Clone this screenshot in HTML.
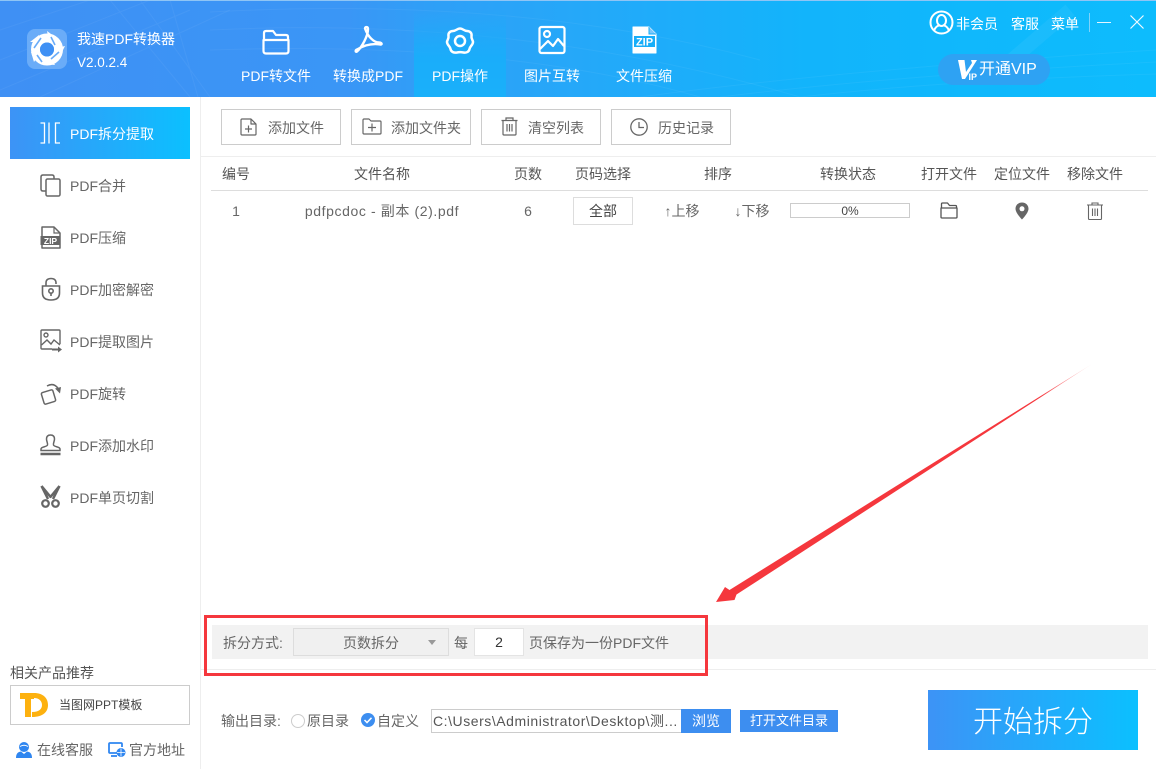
<!DOCTYPE html>
<html lang="zh">
<head>
<meta charset="utf-8">
<title>我速PDF转换器</title>
<style>
html,body{margin:0;padding:0;background:#fff}
body{position:relative;width:1156px;height:769px;overflow:hidden;font-family:"Liberation Sans","Noto Sans CJK SC",sans-serif;font-size:14px;color:#666}
.a{position:absolute;white-space:nowrap}
.c{position:absolute;white-space:nowrap;transform:translateX(-50%);text-align:center}
svg{position:absolute;overflow:visible}
#hd{position:absolute;left:0;top:0;width:1156px;height:97px;background:linear-gradient(90deg,#3f90f4 0%,#3a96f6 30%,#2f9ff7 37%,#25a8f9 50%,#12b4fb 70%,#0dbcfd 100%);overflow:hidden}
#tab{position:absolute;left:414px;top:0;width:92px;height:97px;background:linear-gradient(180deg,rgba(26,173,250,0) 10%,#1aadfa 60%,#1ab0fa 100%)}
.tt{position:absolute;transform:translateX(-50%);top:67px;color:#fff;font-size:14px;white-space:nowrap;line-height:18px}
.wh{color:#fff}
.btn{position:absolute;top:109px;width:118px;height:34px;border:1px solid #ccc;background:#fff}
.btn span{position:absolute;top:9px;font-size:14px;line-height:18px;color:#666;white-space:nowrap}
.side{position:absolute;left:70px;font-size:14px;line-height:18px;color:#666;white-space:nowrap}
.th{position:absolute;top:165px;transform:translateX(-50%);font-size:14px;line-height:18px;color:#555;white-space:nowrap}
.td{position:absolute;top:202px;transform:translateX(-50%);font-size:14px;line-height:18px;color:#666;white-space:nowrap}
</style>
</head>
<body>

<div id="hd">
  <svg style="left:0;top:0" width="1156" height="97" fill="none" stroke="#fff" stroke-opacity=".05">
    <path d="M0 30 L90 0M0 60 L150 0M0 90 L190 10M40 97 L230 10M110 0 L190 97M140 0 L210 97M170 0 L198 97"/>
    <path d="M210 12 Q520 -5 760 60M210 30 Q520 15 800 97M210 50 Q500 40 700 97"/>
    <path d="M640 97 Q840 70 1156 50M720 97 Q900 75 1156 62M800 97 Q950 80 1156 74"/>
    <path d="M1000 70 L1070 10" stroke-width="14" stroke-opacity=".05"/>
  </svg>
  <div style="position:absolute;left:0;top:0;width:1156px;height:1px;background:#8fc5f5"></div>
  <div id="tab"></div>

  <!-- logo -->
  <div style="position:absolute;left:27px;top:29px;width:40px;height:40px;border-radius:8px;background:#6aacf8"></div>
  <svg style="left:27px;top:29px" width="40" height="40" viewBox="0 0 40 40">
    <circle cx="20" cy="20.500" r="11.500" fill="none" stroke="#fff" stroke-width="9"/>
    <path d="M20 2 L28 8 L22 12ZM38 17 L33 27 L30 19ZM28 36 L18 35 L24 29ZM7 33 L4 23 L12 25ZM3 13 L12 6 L13 13Z" fill="#fff"/>
    <path d="M24 8 L28 16M32 23 L24 30M15 33 L10 26M7 19 L14 9" stroke="#6aacf8" stroke-width="1.600"/>
    <circle cx="20" cy="20.500" r="7" fill="#3f90f4"/>
  </svg>
  <div class="a wh" style="left:77px;top:30px;font-size:14px;line-height:18px">我速PDF转换器</div>
  <div class="a wh" style="left:77px;top:54px;font-size:13.500px;line-height:18px">V2.0.2.4</div>

  <!-- tabs -->
  <svg style="left:262px;top:29px" width="28" height="26" viewBox="0 0 28 26" fill="none" stroke="#fff" stroke-width="2.200" stroke-linejoin="round">
    <path d="M2 11V4Q2 2 4 2H11L14 6H24Q26 6 26 8V11"/>
    <path d="M1.500 11H26.500V22Q26.500 24.500 24 24.500H4Q1.500 24.500 1.500 22Z"/>
  </svg>
  <svg style="left:353px;top:25px" width="30" height="32" viewBox="0 0 30 32" fill="none" stroke="#fff" stroke-width="2.400" stroke-linejoin="round">
    <path d="M12 3.500C12 1.500 15 1.500 15 4C15 11 9 22 4 26.500C2.500 27.500 2 25.500 4 24.500C10 21 18 18 27 19.500C29.500 20 29 17.500 26 17.500C21 17.500 15 12 12 3.500Z"/>
  </svg>
  <svg style="left:445px;top:26px" width="30" height="30" viewBox="0 0 30 30" fill="none" stroke="#fff" stroke-width="2.500" stroke-linejoin="round">
    <path d="M15 2.500C18 2.500 19 5 22 5C25 5 27 7 26.500 10C26 13 28 14 28 16C28 19 25 20 24.500 23C24 26 21 27 18.500 26.500C16 26 14 26 12 26.500C9 27 6 26 5.500 23C5 20 2 19 2 16C2 14 4 13 3.500 10C3 7 5 5 8 5C11 5 12 2.500 15 2.500Z"/>
    <circle cx="15" cy="15" r="5"/>
  </svg>
  <svg style="left:538px;top:25px" width="28" height="30" viewBox="0 0 28 30" fill="none" stroke="#fff" stroke-width="2.200" stroke-linejoin="round">
    <rect x="1.500" y="2" width="25" height="26" rx="2"/>
    <circle cx="9" cy="9" r="3"/>
    <path d="M2 24L10 16L15 21L20 14L26 21"/>
  </svg>
  <svg style="left:630px;top:25px" width="28" height="30" viewBox="0 0 28 30">
    <path d="M3 2H19L26 9V28H3Z" fill="#fff" stroke="#fff" stroke-linejoin="round"/>
    <path d="M19 2V9H26" fill="#7cc8fb" stroke="#17aef9"/>
    <rect x="4" y="11" width="21" height="11" fill="#17aef9"/>
    <text x="14.500" y="20.500" text-anchor="middle" fill="#fff" font-size="11" font-family="Liberation Sans" font-weight="bold">ZIP</text>
  </svg>
  <div class="tt" style="left:276px">PDF转文件</div>
  <div class="tt" style="left:368px">转换成PDF</div>
  <div class="tt" style="left:460px">PDF操作</div>
  <div class="tt" style="left:552px">图片互转</div>
  <div class="tt" style="left:644px">文件压缩</div>

  <!-- top right -->
  <svg style="left:929px;top:10px" width="25" height="25" viewBox="0 0 25 25" fill="none" stroke="#fff" stroke-width="2">
    <circle cx="12.500" cy="12.500" r="11"/>
    <ellipse cx="12.500" cy="10.500" rx="4.500" ry="5.500"/>
    <path d="M5 20.500Q7 16 10 15.500M20 20.500Q18 16 15 15.500"/>
  </svg>
  <div class="a wh" style="left:956px;top:15px;line-height:18px;font-size:14px">非会员</div>
  <div class="a wh" style="left:1011px;top:15px;line-height:18px;font-size:14px">客服</div>
  <div class="a wh" style="left:1051px;top:15px;line-height:18px;font-size:14px">菜单</div>
  <div style="position:absolute;left:1089px;top:13px;width:1px;height:19px;background:#7fd3fb"></div>
  <div style="position:absolute;left:1097px;top:22px;width:14px;height:1px;background:#e4f5ff"></div>
  <svg style="left:1130px;top:15px" width="14" height="14" viewBox="0 0 14 14" stroke="#f0faff" stroke-width="1.200" fill="none"><path d="M0.500 0.500L13.500 13.500M13.500 0.500L0.500 13.500"/></svg>

  <div style="position:absolute;left:938px;top:54px;width:112px;height:31px;border-radius:16px;background:#2ea2f3"></div>
  <svg style="left:956px;top:58px" width="24" height="23" viewBox="0 0 24 23" fill="#fff">
    <path d="M2 2H8.500L10 14L16 5L15 2H21L9 21H6Z"/>
    <text x="12.500" y="22" font-size="9" font-weight="bold" font-family="Liberation Sans">IP</text>
  </svg>
  <div class="a wh" style="left:979px;top:60px;line-height:20px;font-size:16px">开通VIP</div>
</div>

<!-- sidebar -->
<div style="position:absolute;left:200px;top:97px;width:1px;height:672px;background:#eee"></div>
<div style="position:absolute;left:10px;top:107px;width:180px;height:52px;background:linear-gradient(90deg,#3d93f6,#0bc0ff)"></div>
<svg style="left:40px;top:122px" width="21" height="22" viewBox="0 0 21 22" fill="none" stroke="#fff" stroke-width="1.300">
  <path d="M0.500 1H4.500V21H0.500M9 0.500V21.500M20 1H15.500V21H20"/>
</svg>
<div class="side wh" style="top:125px;color:#fff">PDF拆分提取</div>

<svg style="left:40px;top:174px" width="22" height="23" viewBox="0 0 22 23" fill="none" stroke="#666" stroke-width="1.500" stroke-linejoin="round">
  <path d="M6 17H3Q1 17 1 15V3Q1 1 3 1H12Q14 1 14 3V5"/>
  <rect x="6" y="5" width="14" height="17" rx="1.500"/>
</svg>
<div class="side" style="top:177px">PDF合并</div>

<svg style="left:40px;top:226px" width="21" height="23" viewBox="0 0 21 23">
  <path d="M2 1H14L20 7V22H2Z" fill="none" stroke="#666" stroke-width="1.500" stroke-linejoin="round"/>
  <path d="M14 1V7H20" fill="none" stroke="#666" stroke-width="1.200"/>
  <rect x="0.500" y="10" width="20" height="9" fill="#666"/>
  <text x="10.500" y="17.800" text-anchor="middle" font-size="8.500" font-weight="bold" fill="#fff" font-family="Liberation Sans">ZIP</text>
</svg>
<div class="side" style="top:229px">PDF压缩</div>

<svg style="left:41px;top:277px" width="20" height="24" viewBox="0 0 20 24" fill="none" stroke="#666" stroke-width="1.600">
  <path d="M5 9V6Q5 1.500 10 1.500Q15 1.500 15 6V7"/>
  <path d="M1.500 9H18.500V16Q18.500 23 10 23Q1.500 23 1.500 16Z"/>
  <circle cx="10" cy="14" r="2.200"/><path d="M10 16V19"/>
</svg>
<div class="side" style="top:281px">PDF加密解密</div>

<svg style="left:40px;top:329px" width="22" height="24" viewBox="0 0 22 24" fill="none" stroke="#666" stroke-width="1.400">
  <path d="M12 20H2Q1 20 1 19V2Q1 1 2 1H19Q20 1 20 2V15"/>
  <circle cx="6" cy="6" r="2"/>
  <path d="M1.500 16L7 11L11 15L14 11L20 16"/>
  <path d="M12 20.500H19" stroke-width="2"/>
  <path d="M18 17.500L22 20.500L18 23.500Z" fill="#666" stroke="none"/>
</svg>
<div class="side" style="top:333px">PDF提取图片</div>

<svg style="left:40px;top:382px" width="22" height="23" viewBox="0 0 22 23" fill="none" stroke="#666" stroke-width="1.500">
  <rect x="2.500" y="9" width="12" height="12" rx="1.500" transform="rotate(-17 8.500 15)"/>
  <path d="M7 4Q14 0 18.500 7"/>
  <path d="M15 6.500L21 5L20 11.500Z" fill="#666" stroke="none"/>
</svg>
<div class="side" style="top:385px">PDF旋转</div>

<svg style="left:40px;top:434px" width="21" height="23" viewBox="0 0 21 23" fill="none" stroke="#666" stroke-width="1.500">
  <path d="M7.500 11C8 9 6.500 7.500 6.500 5Q6.500 1 10.500 1Q14.500 1 14.500 5C14.500 7.500 13 9 13.500 11C14 13 20 12.500 20 15V16.500H1V15C1 12.500 7 13 7.500 11Z"/>
  <path d="M0.500 20H20.500" stroke-width="2.500"/>
</svg>
<div class="side" style="top:437px">PDF添加水印</div>

<svg style="left:40px;top:485px" width="21" height="24" viewBox="0 0 21 24" fill="none" stroke="#666">
  <path d="M1.500 1L8 14M19.500 1L13 14M1.500 1L11 12.500M19.500 1L10 12.500" stroke-width="2.500"/>
  <circle cx="5.500" cy="18.500" r="3.300" stroke-width="2.200"/>
  <circle cx="15.500" cy="18.500" r="3.300" stroke-width="2.200"/>
</svg>
<div class="side" style="top:489px">PDF单页切割</div>

<div class="a" style="left:10px;top:664px;line-height:18px;color:#555;font-size:14px">相关产品推荐</div>
<div style="position:absolute;left:10px;top:685px;width:178px;height:38px;border:1px solid #ccc;background:#fff"></div>
<svg style="left:19px;top:692px" width="30" height="26" viewBox="0 0 30 26" fill="#fdb10f">
  <path d="M1 1H15V7H12V25H6V7H1Z"/>
  <path d="M15 1C24 1 29 6 29 13C29 20 24 25 13 25V20C20 20 23 17 23 13C23 9 20 6 15 6Z"/>
</svg>
<div class="a" style="left:59px;top:696px;line-height:18px;font-size:12px;color:#444">当图网PPT模板</div>

<svg style="left:15px;top:741px" width="18" height="17" viewBox="0 0 18 17">
  <circle cx="9" cy="6" r="5" fill="#2f86f0"/>
  <path d="M1 17Q1 11 6 10.500L9 13L12 10.500Q17 11 17 17Z" fill="#2f86f0"/>
  <path d="M5 5.500Q9 3 13 5.500" stroke="#fff" fill="none"/>
</svg>
<div class="a" style="left:37px;top:741px;line-height:18px;font-size:14px;color:#666">在线客服</div>
<svg style="left:108px;top:741px" width="18" height="17" viewBox="0 0 18 17" fill="none">
  <path d="M9 12H2Q1 12 1 11V3Q1 2 2 2H13Q14 2 14 3V6" stroke="#2f86f0" stroke-width="1.800"/>
  <path d="M3 15H9" stroke="#2f86f0" stroke-width="1.800"/>
  <circle cx="13" cy="11.500" r="4.500" fill="#2f86f0"/>
  <path d="M9 11.500H17M13 7.500V15.500" stroke="#fff" stroke-width=".8"/>
</svg>
<div class="a" style="left:129px;top:741px;line-height:18px;font-size:14px;color:#666">官方地址</div>

<!-- toolbar -->
<div class="btn" style="left:221px"><span style="left:46px">添加文件</span></div>
<div class="btn" style="left:351px"><span style="left:39px">添加文件夹</span></div>
<div class="btn" style="left:481px"><span style="left:46px">清空列表</span></div>
<div class="btn" style="left:611px"><span style="left:46px">历史记录</span></div>

<svg style="left:240px;top:118px" width="17" height="18" viewBox="0 0 17 18" fill="none" stroke="#666" stroke-width="1.200" stroke-linejoin="round">
  <path d="M2 1H11L16 6V16Q16 17 15 17H2Q1 17 1 16V2Q1 1 2 1Z"/><path d="M11 1V6H16"/><path d="M5 11H12M8.500 7.500V14.500"/>
</svg>
<svg style="left:362px;top:118px" width="20" height="17" viewBox="0 0 20 17" fill="none" stroke="#666" stroke-width="1.200" stroke-linejoin="round">
  <path d="M1 2Q1 1 2 1H7L9 3H18Q19 3 19 4V15Q19 16 18 16H2Q1 16 1 15Z"/><path d="M6 9.500H14M10 5.500V13.500"/>
</svg>
<svg style="left:501px;top:117px" width="17" height="19" viewBox="0 0 17 19" fill="none" stroke="#666" stroke-width="1.200">
  <path d="M0.500 3.500H16.500M5 3.500V1H12V3.500"/><path d="M2 3.500V17Q2 18 3 18H14Q15 18 15 17V3.500"/><path d="M6 7V14.500M8.500 7V14.500M11 7V14.500"/>
</svg>
<svg style="left:630px;top:118px" width="18" height="18" viewBox="0 0 18 18" fill="none" stroke="#666" stroke-width="1.300">
  <circle cx="9" cy="9" r="8.200"/><path d="M9 4V9.500H14"/>
</svg>

<div style="position:absolute;left:201px;top:156px;width:955px;height:1px;background:#eee"></div>

<!-- table -->
<div class="th" style="left:236px">编号</div>
<div class="th" style="left:382px">文件名称</div>
<div class="th" style="left:528px">页数</div>
<div class="th" style="left:603px">页码选择</div>
<div class="th" style="left:718px">排序</div>
<div class="th" style="left:848px">转换状态</div>
<div class="th" style="left:949px">打开文件</div>
<div class="th" style="left:1022px">定位文件</div>
<div class="th" style="left:1095px">移除文件</div>
<div style="position:absolute;left:211px;top:190px;width:937px;height:1px;background:#ddd"></div>

<div class="td" style="left:236px">1</div>
<div class="td" style="left:382px;letter-spacing:.6px">pdfpcdoc - 副本 (2).pdf</div>
<div class="td" style="left:528px">6</div>
<div style="position:absolute;left:573px;top:197px;width:58px;height:26px;border:1px solid #ddd;background:#fff"></div>
<div class="td" style="left:603px;color:#444;font-size:14px">全部</div>
<div class="td" style="left:682px">↑上移</div>
<div class="td" style="left:752px">↓下移</div>
<div style="position:absolute;left:790px;top:203px;width:118px;height:13px;border:1px solid #ccc;background:#fff"></div>
<div class="td" style="left:850px;font-size:12px;color:#444">0%</div>
<svg style="left:940px;top:202px" width="18" height="17" viewBox="0 0 18 17" fill="none" stroke="#555" stroke-width="1.300" stroke-linejoin="round">
  <path d="M1.500 6V2Q1.500 1 2.500 1H7.500L9.500 3.500H15.500Q16.500 3.500 16.500 4.500V6"/><path d="M1 6H17V15Q17 16 16 16H2Q1 16 1 15Z"/>
</svg>
<svg style="left:1015px;top:202px" width="14" height="18" viewBox="0 0 14 18">
  <path d="M7 0.500C3 0.500 0.500 3.500 0.500 6.800C0.500 11 7 17.500 7 17.500C7 17.500 13.500 11 13.500 6.800C13.500 3.500 11 0.500 7 0.500Z" fill="#666"/>
  <circle cx="7" cy="6.800" r="2.500" fill="#fff"/>
</svg>
<svg style="left:1087px;top:202px" width="16" height="18" viewBox="0 0 16 18" fill="none" stroke="#666" stroke-width="1.100">
  <path d="M0 3H16M5 3V1H11V3"/><path d="M1.500 3V16.500Q1.500 17.500 2.500 17.500H13.500Q14.500 17.500 14.500 16.500V3"/><path d="M5.500 6.500V14M8 6.500V14M10.500 6.500V14"/>
</svg>

<!-- split bar -->
<div style="position:absolute;left:212px;top:625px;width:936px;height:34px;background:#f2f2f2"></div>
<div class="a" style="left:223px;top:634px;line-height:18px;font-size:14px;color:#666">拆分方式:</div>
<div style="position:absolute;left:293px;top:628px;width:154px;height:26px;border:1px solid #ddd;background:#f0f0f0"></div>
<div class="c" style="left:371px;top:634px;line-height:18px;font-size:14px;color:#666">页数拆分</div>
<div style="position:absolute;left:428px;top:640px;width:0;height:0;border-left:4.500px solid transparent;border-right:4.500px solid transparent;border-top:5px solid #999"></div>
<div class="a" style="left:454px;top:634px;line-height:18px;font-size:14px;color:#666">每</div>
<div style="position:absolute;left:474px;top:628px;width:48px;height:26px;border:1px solid #e4e4e4;background:#fff"></div>
<div class="c" style="left:499px;top:633px;line-height:18px;font-size:14px;color:#333">2</div>
<div class="a" style="left:529px;top:634px;line-height:18px;font-size:14px;color:#666">页保存为一份PDF文件</div>
<div style="position:absolute;left:201px;top:669px;width:955px;height:1px;background:#eee"></div>

<!-- red annotation -->
<div style="position:absolute;left:204px;top:615px;width:498px;height:55px;border:3px solid #f5373d"></div>
<svg style="left:0;top:0" width="1156" height="769">
  <defs><linearGradient id="g" gradientUnits="userSpaceOnUse" x1="1092" y1="364" x2="1040" y2="397"><stop offset="0" stop-color="#f5373d" stop-opacity=".1"/><stop offset="1" stop-color="#f5373d"/></linearGradient></defs>
  <path d="M1092 364L736.500 594.500L734.500 600L716 602L725 587L729.500 590Z" fill="url(#g)"/>
</svg>

<!-- bottom -->
<div class="a" style="left:221px;top:712px;line-height:18px;font-size:14px;color:#666">输出目录:</div>
<div style="position:absolute;left:291px;top:714px;width:12px;height:12px;border:1px solid #ccc;border-radius:50%;background:#fff"></div>
<div class="a" style="left:307px;top:712px;line-height:18px;font-size:14px;color:#666">原目录</div>
<svg style="left:361px;top:713px" width="14" height="14" viewBox="0 0 14 14">
  <circle cx="7" cy="7" r="7" fill="#3d8ef0"/>
  <path d="M3.500 7L6 9.500L10.500 4.800" stroke="#fff" stroke-width="1.500" fill="none"/>
</svg>
<div class="a" style="left:377px;top:712px;line-height:18px;font-size:14px;color:#666">自定义</div>
<div style="position:absolute;left:431px;top:709px;width:249px;height:22px;border:1px solid #ccc;border-right:0;background:#fff"></div>
<div class="a" style="left:433px;top:712px;line-height:18px;font-size:14px;color:#555;letter-spacing:.55px;width:247px;overflow:hidden">C:\Users\Administrator\Desktop\测...</div>
<div class="a" style="left:681px;top:709px;width:50px;height:24px;background:#3d8ef0;color:#fff;text-align:center;line-height:24px;font-size:14px">浏览</div>
<div class="a" style="left:740px;top:710px;width:98px;height:22px;background:#3d8ef0;color:#fff;text-align:center;line-height:22px;font-size:13px">打开文件目录</div>
<div class="a" style="left:928px;top:690px;width:210px;height:60px;background:linear-gradient(90deg,#3d93f6,#0bc0ff);color:#fff;text-align:center;line-height:66px;font-size:30px;font-weight:300">开始拆分</div>

</body>
</html>
